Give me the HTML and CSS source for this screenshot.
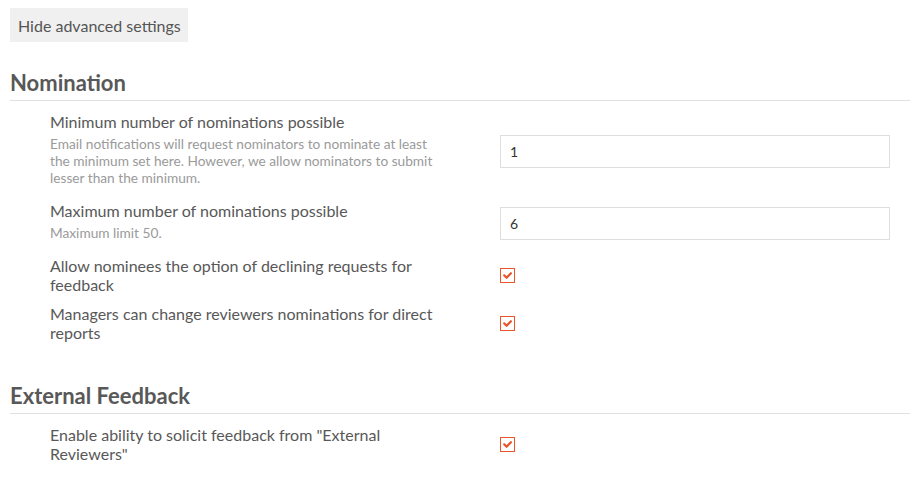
FILE: index.html
```html
<!DOCTYPE html>
<html>
<head>
<meta charset="utf-8">
<link rel="stylesheet" href="styles.css">
</head>
<body>
<div class="page">
  <button class="toggle-btn" type="button">Hide advanced settings</button>

  <section class="section">
    <h2 class="section-title">Nomination</h2>
    <div class="rows">
      <div class="row">
        <div class="label-col">
          <div class="label">Minimum number of nominations possible</div>
          <div class="help">Email notifications will request nominators to nominate at least the minimum set here. However, we allow nominators to submit lesser than the minimum.</div>
        </div>
        <div class="field-col"><input class="text-input" type="text" value="1"></div>
      </div>
      <div class="row">
        <div class="label-col">
          <div class="label">Maximum number of nominations possible</div>
          <div class="help">Maximum limit 50.</div>
        </div>
        <div class="field-col"><input class="text-input" type="text" value="6"></div>
      </div>
      <div class="row">
        <div class="label-col">
          <div class="label">Allow nominees the option of declining requests for feedback</div>
        </div>
        <div class="field-col">
          <span class="checkbox"><svg viewBox="0 0 15 15" width="15" height="15"><path d="M4.2 7.3 L6.6 9.8 L10.9 5.2" fill="none" stroke="#ea552b" stroke-width="2.2" stroke-linecap="round" stroke-linejoin="round"/></svg></span>
        </div>
      </div>
      <div class="row">
        <div class="label-col">
          <div class="label">Managers can change reviewers nominations for direct reports</div>
        </div>
        <div class="field-col">
          <span class="checkbox"><svg viewBox="0 0 15 15" width="15" height="15"><path d="M4.2 7.3 L6.6 9.8 L10.9 5.2" fill="none" stroke="#ea552b" stroke-width="2.2" stroke-linecap="round" stroke-linejoin="round"/></svg></span>
        </div>
      </div>
    </div>
  </section>

  <section class="section section-ext">
    <h2 class="section-title">External Feedback</h2>
    <div class="rows">
      <div class="row">
        <div class="label-col">
          <div class="label">Enable ability to solicit feedback from "External Reviewers"</div>
        </div>
        <div class="field-col">
          <span class="checkbox"><svg viewBox="0 0 15 15" width="15" height="15"><path d="M4.2 7.3 L6.6 9.8 L10.9 5.2" fill="none" stroke="#ea552b" stroke-width="2.2" stroke-linecap="round" stroke-linejoin="round"/></svg></span>
        </div>
      </div>
    </div>
  </section>
</div>
</body>
</html>
```

FILE: styles.css
```css
* { box-sizing: border-box; }

html, body {
  margin: 0;
  padding: 0;
  background: #fff;
}

body {
  font-family: Lato, "Open Sans", "Liberation Sans", sans-serif;
  color: #555;
}

.page {
  width: 912px;
  padding: 8px 2px 0 10px;
}

.toggle-btn {
  display: block;
  height: 34px;
  padding: 0 7px 0 8px;
  border: 0;
  background: #f0f0f0;
  font-family: inherit;
  font-size: 16px;
  color: #555;
  cursor: pointer;
}

.section-title {
  margin: 26px 0 0 0;
  padding-bottom: 3px;
  border-bottom: 1px solid #e0e0e0;
  font-size: 22px;
  line-height: 29px;
  font-weight: 700;
  color: #585858;
}

.section-ext .section-title {
  margin-top: 29px;
}

.rows {
  display: flex;
  flex-direction: column;
  gap: 10px;
  padding: 11px 20px 10px 40px;
}

.row {
  display: grid;
  grid-template-columns: 400px 1fr;
  column-gap: 50px;
  align-items: center;
}

.label {
  font-size: 16px;
  line-height: 19px;
  color: #585858;
}

.help {
  margin-top: 4px;
  margin-bottom: 5px;
  font-size: 13.7px;
  line-height: 17px;
  color: #9a9a9a;
}

.text-input {
  display: block;
  width: 100%;
  height: 33px;
  padding: 0 9px;
  border: 1px solid #dedede;
  border-radius: 0;
  font-family: inherit;
  font-size: 14px;
  color: #333;
  background: #fff;
  outline: none;
}

.checkbox {
  display: block;
  width: 15px;
  height: 15px;
  border: 1px solid #ea552b;
  position: relative;
}

.checkbox svg {
  position: absolute;
  left: -1px;
  top: -1px;
}
```
